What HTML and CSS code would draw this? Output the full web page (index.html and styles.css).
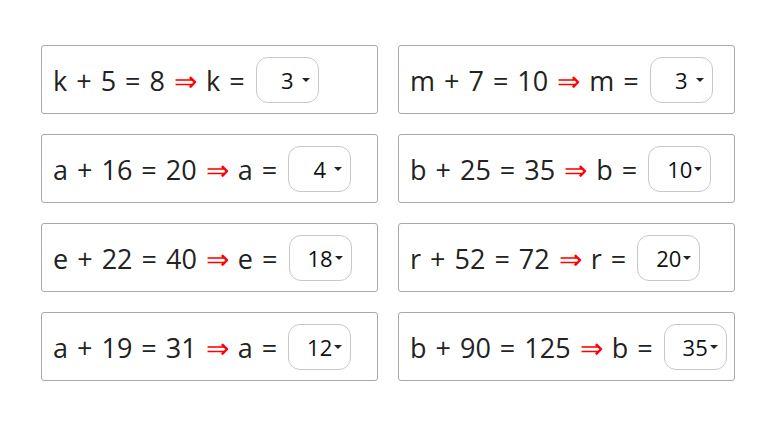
FILE: index.html
```html
<!DOCTYPE html>
<html>
<head>
<meta charset="utf-8">
<link rel="stylesheet" href="styles.css">
</head>
<body>
<div class="grid">
  <div class="card"><span class="eq">k + 5 = 8 <span class="arrow">⇒</span> k = </span><div class="sel">3<i class="caret"></i></div></div>
  <div class="card"><span class="eq">m + 7 = 10 <span class="arrow">⇒</span> m = </span><div class="sel">3<i class="caret"></i></div></div>
  <div class="card"><span class="eq">a + 16 = 20 <span class="arrow">⇒</span> a = </span><div class="sel">4<i class="caret"></i></div></div>
  <div class="card"><span class="eq">b + 25 = 35 <span class="arrow">⇒</span> b = </span><div class="sel">10<i class="caret"></i></div></div>
  <div class="card"><span class="eq">e + 22 = 40 <span class="arrow">⇒</span> e = </span><div class="sel">18<i class="caret"></i></div></div>
  <div class="card"><span class="eq">r + 52 = 72 <span class="arrow">⇒</span> r = </span><div class="sel">20<i class="caret"></i></div></div>
  <div class="card"><span class="eq">a + 19 = 31 <span class="arrow">⇒</span> a = </span><div class="sel">12<i class="caret"></i></div></div>
  <div class="card"><span class="eq">b + 90 = 125 <span class="arrow">⇒</span> b = </span><div class="sel">35<i class="caret"></i></div></div>
</div>
</body>
</html>
```
FILE: styles.css
```css
html, body { margin: 0; padding: 0; background: #fff; }
body { font-family: "Open Sans", "Noto Sans", sans-serif; color: #222; }
.grid {
  display: grid;
  grid-template-columns: 337px 337px;
  grid-auto-rows: 69px;
  column-gap: 20px;
  row-gap: 20px;
  padding: 45px 0 0 41px;
}
.card {
  box-sizing: border-box;
  border: 1px solid #a9a9a9;
  border-radius: 3px;
  display: flex;
  align-items: center;
  padding-left: 11px;
}
.eq { font-size: 27px; white-space: pre; word-spacing: 2px; }
.arrow { color: #ff0000; font-size: 28px; }
.sel {
  position: relative;
  box-sizing: border-box;
  width: 63px;
  height: 46px;
  border: 1px solid #c8c8c8;
  border-radius: 12px;
  display: flex;
  align-items: center;
  justify-content: center;
  margin-left: 2px;
  font-size: 22px;
  color: #111;
}
.caret {
  position: absolute;
  left: 45px;
  top: 20px;
  width: 0; height: 0;
  border-left: 4.5px solid transparent;
  border-right: 4.5px solid transparent;
  border-top: 4.5px solid #222;
}
```
